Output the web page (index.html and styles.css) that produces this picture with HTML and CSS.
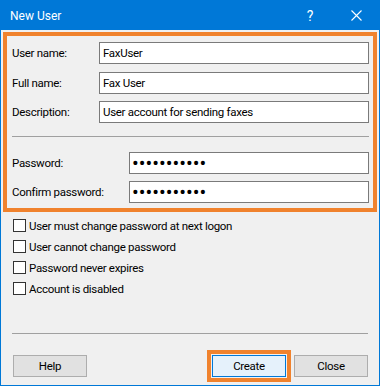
FILE: index.html
```html
<!DOCTYPE html>
<html lang="en">
<head>
    <meta charset="UTF-8">
    <title>New User</title>
    <link rel="stylesheet" href="styles.css">
</head>
<body>
    <div class="window">
        <div class="titlebar">
            <span class="title">New User</span>
            <span class="title-help">?</span>
            <span class="title-close">
                <svg width="11" height="11" viewBox="0 0 11 11">
                    <path d="M0.5 0.5 L10.5 10.5 M10.5 0.5 L0.5 10.5" stroke="#fff" stroke-width="1.1" fill="none"/>
                </svg>
            </span>
        </div>

        <div class="client">
            <!-- Account fields (highlighted) -->
            <div class="highlight">
                <div class="field-row">
                    <label for="userName">User name:</label>
                    <input type="text" id="userName" class="field" value="FaxUser">
                </div>
                <div class="field-row">
                    <label for="fullName">Full name:</label>
                    <input type="text" id="fullName" class="field" value="Fax User">
                </div>
                <div class="field-row">
                    <label for="description">Description:</label>
                    <input type="text" id="description" class="field" value="User account for sending faxes">
                </div>

                <div class="separator"></div>

                <div class="field-row pw-row">
                    <label for="password">Password:</label>
                    <input type="password" id="password" class="field pw" value="faxpassword">
                </div>
                <div class="field-row pw-row">
                    <label for="confirm">Confirm password:</label>
                    <input type="password" id="confirm" class="field pw" value="faxpassword">
                </div>
            </div>

            <!-- Options -->
            <div class="checks">
                <label class="check"><input type="checkbox"> User must change password at next logon</label>
                <label class="check"><input type="checkbox"> User cannot change password</label>
                <label class="check"><input type="checkbox"> Password never expires</label>
                <label class="check"><input type="checkbox"> Account is disabled</label>
            </div>

            <div class="separator bottom-sep"></div>

            <div class="buttons">
                <button type="button" class="btn">Help</button>
                <span class="spacer"></span>
                <button type="button" class="btn btn-default">Create</button>
                <button type="button" class="btn">Close</button>
            </div>
        </div>
    </div>
</body>
</html>
```

FILE: styles.css
```css
/* General Styles */
body {
    margin: 0;
    padding: 0;
    font-family: Roboto, "Liberation Sans", sans-serif;
    font-size: 11.5px;
    letter-spacing: -0.3px;
    color: #000;
    background: #f0f0f0;
}
.window {
    width: 380px;
    height: 386px;
    box-sizing: border-box;
    border: 1px solid #0078d7;
    background: #f0f0f0;
}

/* Title bar */
.titlebar {
    height: 29px;
    background: #0078d7;
    color: #fff;
    display: flex;
    align-items: center;
    letter-spacing: 0;
}
.title {
    flex: 1;
    padding-left: 9px;
    font-size: 12px;
}
.title-help {
    width: 46px;
    text-align: center;
    font-size: 14px;
}
.title-close {
    width: 46px;
    display: flex;
    justify-content: center;
    align-items: center;
}

/* Client area */
.client {
    padding: 2px 2px 0 2px;
}
.highlight {
    border: 4px solid #f0822d;
    padding: 6px 4px 5px 5px;
}
.field-row {
    display: flex;
    align-items: center;
    height: 22px;
    margin-bottom: 7.5px;
}
.field-row:last-child {
    margin-bottom: 0;
}
.field-row label {
    width: 87px;
    flex: none;
}
.pw-row label {
    width: 117px;
}
.pw-row {
    margin-bottom: 7px;
}
.field {
    flex: 1;
    min-width: 0;
    height: 22px;
    box-sizing: border-box;
    border: 1px solid #7a7a7a;
    background: #fff;
    padding: 0 3px;
    margin: 0;
    font-family: inherit;
    font-size: 11.5px;
    letter-spacing: -0.3px;
    color: #000;
    outline: none;
}
.field.pw {
    font-size: 20px;
    letter-spacing: 0;
    padding-left: 2px;
}
.separator {
    height: 1px;
    background: #a0a0a0;
    margin: 13px 0 15px 0;
}

/* Checkboxes */
.checks {
    padding: 3px 0 0 10px;
}
.check {
    display: flex;
    align-items: center;
    height: 21px;
}
.check input {
    appearance: none;
    -webkit-appearance: none;
    width: 13px;
    height: 13px;
    box-sizing: border-box;
    margin: 0 3px 0 0;
    border: 1px solid #333;
    background: #fff;
    border-radius: 0;
}

.bottom-sep {
    margin: 34px 9px 21px 9px;
}

/* Buttons */
.buttons {
    display: flex;
    padding: 0 9px 0 10px;
    gap: 8px;
}
.spacer {
    flex: 1;
}
.btn {
    width: 74px;
    height: 22px;
    box-sizing: border-box;
    border: 1px solid #adadad;
    background: #e1e1e1;
    font-family: inherit;
    font-size: 11.5px;
    letter-spacing: -0.3px;
    color: #000;
    padding: 0;
}
.btn-default {
    border-color: #0078d7;
    background: #e5f1fb;
    outline: 4px solid #f0822d;
    outline-offset: 1px;
}
```
